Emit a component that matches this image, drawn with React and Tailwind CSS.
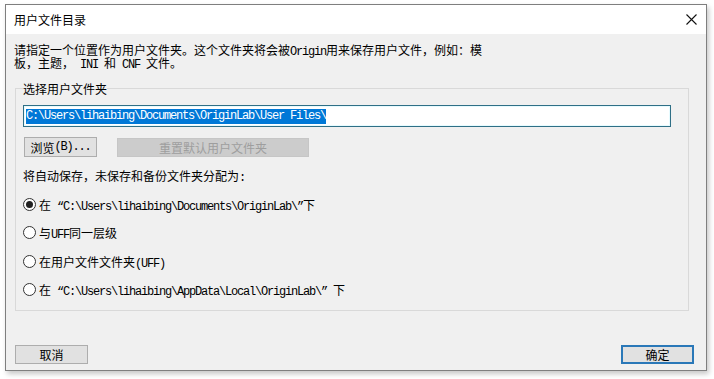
import React from "react";

const L = ({ children }) => (
  <span className="font-['Liberation_Mono',monospace] text-[12px] tracking-[-1.2px] leading-none whitespace-pre">
    {children}
  </span>
);

const Radio = ({ checked, children, className = "" }) => (
  <div className={"flex items-center h-[13px] " + className}>
    <div className="w-[13px] h-[13px] rounded-full border border-[#333333] bg-white flex items-center justify-center shrink-0">
      {checked && <div className="w-[7px] h-[7px] rounded-full bg-[#222222]" />}
    </div>
    <div className="ml-[3px] whitespace-pre leading-[13px] h-[13px]">{children}</div>
  </div>
);

export default function App() {
  return (
    <div className="w-[714px] h-[379px] bg-white pt-[4px] pl-[5px] font-['Noto_Sans_CJK_SC',sans-serif] text-[12px] text-black leading-[13px]">
      <div className="w-[702px] h-[367px] border border-[#7f7f7f] bg-[#f0f0f0] flex flex-col shadow-[2px_3px_5px_rgba(0,0,0,0.22)]">
        {/* title bar */}
        <div className="h-[29px] bg-white flex items-center justify-between pl-[8px] pr-[9px] shrink-0">
          <div>用户文件目录</div>
          <svg width="11" height="11" viewBox="0 0 11 11" className="text-[#111]">
            <path d="M0.5 0.5 L10.5 10.5 M10.5 0.5 L0.5 10.5" stroke="currentColor" strokeWidth="1.1" fill="none" />
          </svg>
        </div>
        {/* description */}
        <div className="pl-[8px] pt-[9px]">
          <div className="whitespace-pre h-[13px]">
            请指定一个位置作为用户文件夹。这个文件夹将会被<L>Origin</L>用来保存用户文件，例如：模
          </div>
          <div className="whitespace-pre h-[13px]">
            板，主题，<L> INI </L>和<L> CNF </L>文件。
          </div>
        </div>
        {/* group */}
        <fieldset className="ml-[9px] mt-[13px] w-[674px] border border-[#d9d9d9] pl-[7px] pb-[14px]">
          <legend className="px-0 leading-[13px]">选择用户文件夹</legend>
          <div className="mt-[10px] w-[648px] h-[22px] border border-[#2f6f86] bg-white flex items-center pl-[2px] shadow-[inset_0_0_0_1px_#e6fbff]">
            <div className="bg-[#0078d7] text-white h-[15px] flex items-center">
              <L>C:\Users\lihaibing\Documents\OriginLab\User Files\</L>
            </div>
          </div>
          <div className="mt-[10px] flex items-center">
            <div className="ml-[1px] w-[73px] h-[20px] border border-[#adadad] bg-[#e1e1e1] flex items-center justify-center whitespace-pre">
              浏览<L>(B)...</L>
            </div>
            <div className="ml-[20px] w-[192px] h-[19px] border border-[#c6c6c6] bg-[#cccccc] text-[#9e9e9e] flex items-center justify-center">
              重置默认用户文件夹
            </div>
          </div>
          <div className="mt-[12px] whitespace-pre h-[13px]">
            将自动保存，未保存和备份文件夹分配为<L>:</L>
          </div>
          <Radio checked className="mt-[16px]">
            在<L> “C:\Users\lihaibing\Documents\OriginLab\”</L>下
          </Radio>
          <Radio className="mt-[15px]">
            与<L>UFF</L>同一层级
          </Radio>
          <Radio className="mt-[16px]">
            在用户文件文件夹<L>(UFF)</L>
          </Radio>
          <Radio className="mt-[15px]">
            在<L> “C:\Users\lihaibing\AppData\Local\OriginLab\” </L>下
          </Radio>
        </fieldset>
        {/* buttons */}
        <div className="mt-auto mb-[6px] flex justify-between pl-[9px] pr-[12px]">
          <div className="w-[73px] h-[19px] border border-[#adadad] bg-[#e1e1e1] flex items-center justify-center">
            取消
          </div>
          <div className="w-[73px] h-[19px] border-2 border-[#2a78b8] bg-[#e1e1e1] flex items-center justify-center">
            确定
          </div>
        </div>
      </div>
    </div>
  );
}
